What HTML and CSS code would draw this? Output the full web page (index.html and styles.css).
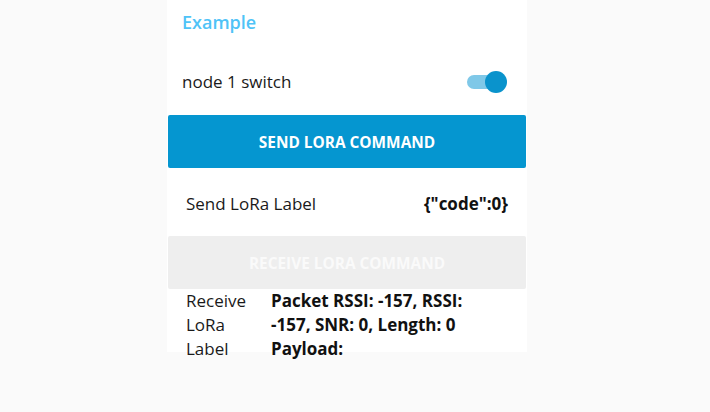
FILE: index.html
```html
<!DOCTYPE html>
<html>
<head>
<meta charset="utf-8">
<link rel="stylesheet" href="styles.css">
</head>
<body>
<div class="viewport">
<div class="card">
  <div class="header">Example</div>
  <div class="switch-row">
    <span class="label">node 1 switch</span>
    <span class="switch"><span class="track"></span><span class="thumb"></span></span>
  </div>
  <button class="btn btn-primary">SEND LORA COMMAND</button>
  <div class="kv-row">
    <span class="label">Send LoRa Label</span>
    <span class="value">{"code":0}</span>
  </div>
  <button class="btn btn-disabled">RECEIVE LORA COMMAND</button>
  <div class="kv-grid">
    <span class="label narrow">Receive LoRa Label</span>
    <span class="value">Packet RSSI: -157, RSSI: -157, SNR: 0, Length: 0 Payload:</span>
  </div>
</div>
</div>
</body>
</html>
```
FILE: styles.css
```css
html, body {
  margin: 0;
  padding: 0;
  min-height: 100%;
  height: 100%;
  background: #fafafa;
  font-family: "Open Sans", "Noto Sans", sans-serif;
  color: #1a1a1a;
}
.viewport {
  height: 362px;
  overflow: hidden;
}
.card {
  margin-left: 167px;
  width: 360px;
  height: 352px;
  background: #ffffff;
  display: flex;
  flex-direction: column;
}
.card > * {
  flex-shrink: 0;
}
.header {
  height: 44px;
  line-height: 44px;
  padding-left: 15px;
  font-size: 18px;
  font-weight: 600;
  color: #4fc3f7;
}
.switch-row {
  height: 71px;
  display: flex;
  align-items: center;
  justify-content: space-between;
  padding: 4px 20px 0 15px;
  box-sizing: border-box;
  font-size: 17px;
}
.switch {
  position: relative;
  width: 40px;
  height: 22px;
}
.track {
  position: absolute;
  left: 0;
  top: 4px;
  width: 36px;
  height: 14px;
  border-radius: 7px;
  background: #7fc8e8;
}
.thumb {
  position: absolute;
  right: 0;
  top: 0;
  width: 22px;
  height: 22px;
  border-radius: 50%;
  background: #0a93cc;
}
.btn {
  margin: 0 1px;
  height: 53px;
  padding-top: 2px;
  border: none;
  border-radius: 2px;
  font-family: inherit;
  font-size: 15.4px;
  font-weight: 700;
  color: #ffffff;
}
.btn-primary {
  background: #0596d0;
}
.btn-disabled {
  background: #eeeeee;
  color: #fafafa;
}
.kv-row {
  height: 68px;
  display: flex;
  align-items: center;
  justify-content: space-between;
  padding: 2px 19px 0 19px;
  box-sizing: border-box;
  font-size: 17px;
}
.value {
  font-weight: 700;
  color: #111;
}
.kv-grid {
  display: grid;
  grid-template-columns: 85px 215px;
  padding: 0 19px 0 19px;
  font-size: 17px;
  line-height: 24px;
}
.narrow {
  width: 70px;
}
```
